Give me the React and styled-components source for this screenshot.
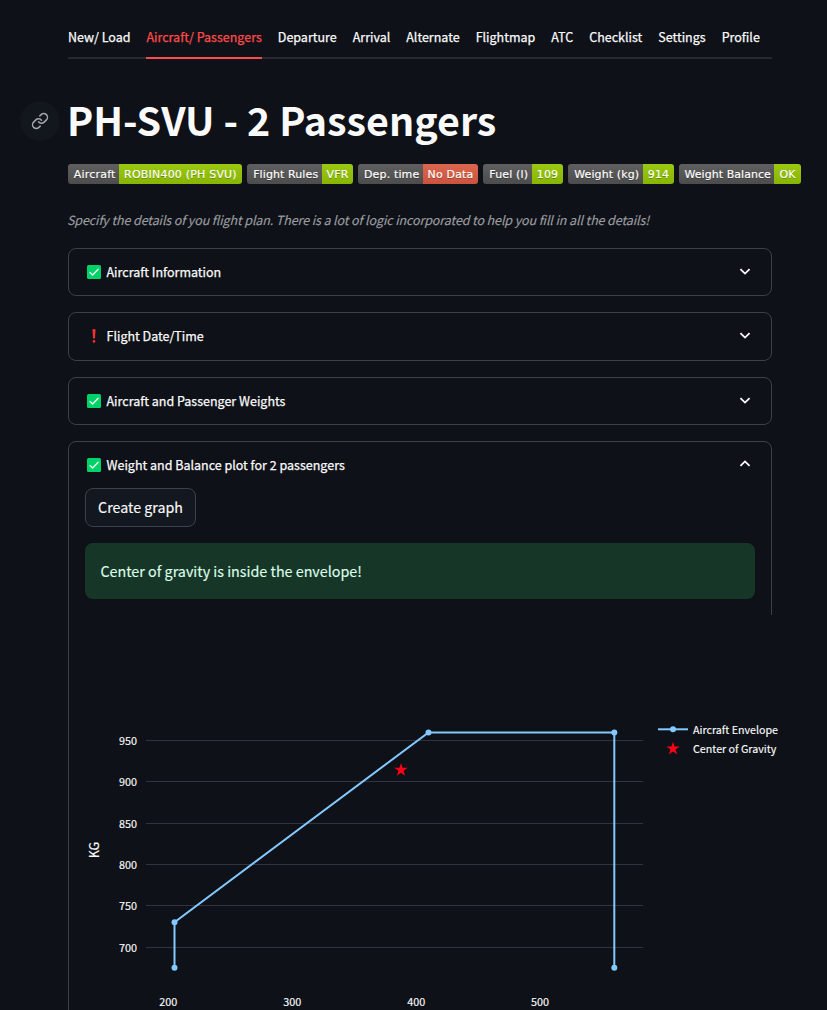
import React from 'react';
import styled, { createGlobalStyle } from 'styled-components';
import { Link } from 'lucide-react';

const sans = '"Noto Sans CJK SC", "Noto Sans", sans-serif';

const GlobalStyle = createGlobalStyle`
  * { box-sizing: border-box; }
  body {
    margin: 0;
    background: #0e1117;
    color: #fafafa;
    font-family: ${sans};
    overflow: hidden;
  }
`;

const Page = styled.main`
  width: 827px;
  height: 1010px;
  padding: 17px 0 0 68px;
  overflow: hidden;
`;

const Tabs = styled.nav`
  display: flex;
  gap: 16px;
  width: 704px;
  height: 42px;
  border-bottom: 2px solid #262930;
`;

const Tab = styled.a`
  height: 42px;
  font-size: 12.5px;
  font-weight: 400;
  -webkit-text-stroke: 0.25px;
  line-height: 40px;
  white-space: nowrap;
  color: ${(p) => (p.$active ? '#ff4b4b' : '#fafafa')};
  border-bottom: 2px solid ${(p) => (p.$active ? '#ff4b4b' : 'transparent')};
`;

const Heading = styled.header`
  display: flex;
  align-items: center;
  gap: 7px;
  height: 53px;
  margin: 36px 0 0 -48px;
`;

const Anchor = styled.a`
  display: flex;
  flex: none;
  align-items: center;
  justify-content: center;
  width: 40px;
  height: 40px;
  margin-top: -1px;
  border-radius: 50%;
  background: #12161d;
  color: #a3a5aa;
`;

const Title = styled.h1`
  margin: -6px 0 0;
  font-size: 39.4px;
  font-weight: 700;
  line-height: 53px;
  white-space: nowrap;
`;

const Badges = styled.div`
  display: flex;
  gap: 5px;
  margin-top: 16px;
  height: 20px;
`;

const Badge = styled.span`
  display: flex;
  flex: none;
  height: 20px;
  border-radius: 3px;
  overflow: hidden;
  font: 11px/21px "DejaVu Sans", sans-serif;
  color: #fff;
  white-space: nowrap;
  -webkit-text-stroke: 0.15px;
  text-shadow: 0 1px 0 rgba(1, 1, 1, 0.3);
`;

const BadgePart = styled.span`
  display: flex;
  justify-content: center;
  width: ${(p) => p.$w}px;
  padding-left: ${(p) => p.$shift || 0}px;
  letter-spacing: ${(p) => p.$track || 0}px;
  background: linear-gradient(rgba(187, 187, 187, 0.1), rgba(0, 0, 0, 0.1)), ${(p) => p.$bg};
`;

const Caption = styled.p`
  margin: 25px 0 18px -1px;
  height: 21px;
  font-size: 12.5px;
  font-style: italic;
  letter-spacing: -0.11px;
  -webkit-text-stroke: 0.15px;
  line-height: 21px;
  white-space: nowrap;
  color: #9b9da0;
`;

const Expanders = styled.section`
  display: flex;
  flex-direction: column;
  gap: 16px;
  width: 704px;
`;

const Expander = styled.article`
  height: ${(p) => (p.$open ? '700px' : '48.4px')};
  border: 1px solid #3d4045;
  border-radius: 8px;
`;

const Summary = styled.div`
  display: flex;
  align-items: center;
  height: 46px;
  padding: 0 19px 0 18px;
  font-size: 12.5px;
  font-weight: 400;
  -webkit-text-stroke: 0.25px;
  line-height: 20px;
  white-space: nowrap;
`;

const Mark = styled.svg`
  flex: none;
  width: 14px;
  height: 14px;
  margin-right: 5.5px;
`;

const Chevron = styled.svg`
  width: 14px;
  height: 14px;
  margin: -2.4px 0 0 auto;
  transform: ${(p) => (p.$up ? 'scaleY(-1)' : 'none')};
`;

const Details = styled.div`
  display: flex;
  flex-direction: column;
  align-items: flex-start;
  gap: 16px;
  margin-top: -0.4px;
  padding: 0 16px;
`;

const Button = styled.button`
  width: 111px;
  height: 39px;
  padding: 0;
  border: 1px solid #3e4148;
  border-radius: 8px;
  background: #131720;
  color: #fafafa;
  font: 400 14.25px/36px ${sans};
  -webkit-text-stroke: 0.15px;
  white-space: nowrap;
`;

const Success = styled.div`
  width: 670px;
  height: 56px;
  padding-left: 15.4px;
  border-radius: 8px;
  background: #163728;
  color: #dffde9;
  font-size: 14.32px;
  -webkit-text-stroke: 0.15px;
  line-height: 56px;
`;

const Chart = styled.svg`
  position: relative;
  flex: none;
  width: 742px;
  height: 395px;
  background: #0e1117;
  font-family: ${sans};
  fill: #fafafa;

  text {
    stroke: #fafafa;
    stroke-width: 0.15px;
  }
`;

const tabs = ['New/ Load', 'Aircraft/ Passengers', 'Departure', 'Arrival', 'Alternate', 'Flightmap', 'ATC', 'Checklist', 'Settings', 'Profile'];

const green = '#97ca00';
const badges = [
  ['Aircraft', 51, 'ROBIN400 (PH SVU)', 123, green, 0.2],
  ['Flight Rules', 75, 'VFR', 31, green, 0.1],
  ['Dep. time', 65, 'No Data', 55, '#e05d44', 0.15],
  ['Fuel (l)', 49, '109', 31, green, 0.15],
  ['Weight (kg)', 75, '914', 31, green, 0.1],
  ['Weight Balance', 95, 'OK', 27, green, 0.05],
];

function CheckMark() {
  return (
    <Mark viewBox="0 0 14 14">
      <rect width="14" height="14" rx="1.5" fill="#00d26a" />
      <path d="M3 7.6 5.6 10 11.2 4.2" fill="none" stroke="#f4f4f4" strokeWidth="1.3" strokeLinecap="round" strokeLinejoin="round" />
    </Mark>
  );
}

function AlertMark() {
  return (
    <Mark viewBox="0 0 14 14">
      <path d="M5.5.8Q5.5 0 7 0T8.5.8L8 9Q7.8 9.8 7 9.8T6 9Z" fill="#f8312f" />
      <circle cx="7" cy="12.4" r="1.3" fill="#f8312f" />
    </Mark>
  );
}

function Section({ title, alert, open, children }) {
  return (
    <Expander $open={open}>
      <Summary>
        {alert ? <AlertMark /> : <CheckMark />}
        {title}
        <Chevron $up={open} viewBox="0 0 14 14">
          <path d="M2.4 5.1 7 9.6 11.6 5.1" fill="none" stroke="#fafafa" strokeWidth="1.8" />
        </Chevron>
      </Summary>
      {children}
    </Expander>
  );
}

const yTicks = [[950, 740.5], [900, 781.5], [850, 823.5], [800, 864.5], [750, 905.5], [700, 947.5]];
const xTicks = [[200, 168.3], [300, 292.2], [400, 416.2], [500, 540]];
const envelope = [[174.5, 967.7], [174.5, 922.3], [428.5, 732.4], [614.3, 732.4], [614.3, 967.7]];
const star = 'M0-7 1.57-2.16H6.66L2.54.83 4.11 5.66 0 2.68-4.11 5.66-2.54.83-6.66-2.16H-1.57Z';

function BalanceChart() {
  return (
    <Chart viewBox="85 615 742 395">
      {yTicks.map(([v, y]) => (
        <g key={v}>
          <path d={`M146 ${y}H643`} stroke="#31333f" strokeWidth="1" />
          <text x="137" y={y + 4.7} fontSize="10.8" textAnchor="end">{v}</text>
        </g>
      ))}
      {xTicks.map(([v, x]) => (
        <text key={v} x={x} y="1006" fontSize="10.8" textAnchor="middle">{v}</text>
      ))}
      <text transform="translate(99 850) rotate(-90)" fontSize="12.5" textAnchor="middle">KG</text>
      <polyline points={envelope.join(' ')} fill="none" stroke="#83c9ff" strokeWidth="2" />
      {envelope.map(([x, y]) => <circle key={`${x}-${y}`} cx={x} cy={y} r="3" fill="#83c9ff" />)}
      <path d={star} transform="translate(401 770)" fill="#ff0019" />
      <path d="M658 729.3H688" stroke="#83c9ff" strokeWidth="2" />
      <circle cx="673" cy="729.3" r="3" fill="#83c9ff" />
      <path d={star} transform="translate(673 748.7)" fill="#ff0019" />
      <text x="693" y="734" fontSize="10.7">Aircraft Envelope</text>
      <text x="693" y="753" fontSize="10.7">Center of Gravity</text>
    </Chart>
  );
}

export default function App() {
  return (
    <>
      <GlobalStyle />
      <Page>
        <Tabs>
          {tabs.map((t, i) => <Tab key={t} $active={i === 1}>{t}</Tab>)}
        </Tabs>
        <Heading>
          <Anchor><Link size={18} strokeWidth={2} /></Anchor>
          <Title>PH-SVU - 2 Passengers</Title>
        </Heading>
        <Badges>
          {badges.map(([label, lw, value, vw, color, track]) => (
            <Badge key={label}>
              <BadgePart $w={lw} $shift={2.4} $track={track} $bg="#555">{label}</BadgePart>
              <BadgePart $w={vw} $track={track} $bg={color}>{value}</BadgePart>
            </Badge>
          ))}
        </Badges>
        <Caption>Specify the details of you flight plan. There is a lot of logic incorporated to help you fill in all the details!</Caption>
        <Expanders>
          <Section title="Aircraft Information" />
          <Section title="Flight Date/Time" alert />
          <Section title="Aircraft and Passenger Weights" />
          <Section title="Weight and Balance plot for 2 passengers" open>
            <Details>
              <Button>Create graph</Button>
              <Success>Center of gravity is inside the envelope!</Success>
              <BalanceChart />
            </Details>
          </Section>
        </Expanders>
      </Page>
    </>
  );
}
